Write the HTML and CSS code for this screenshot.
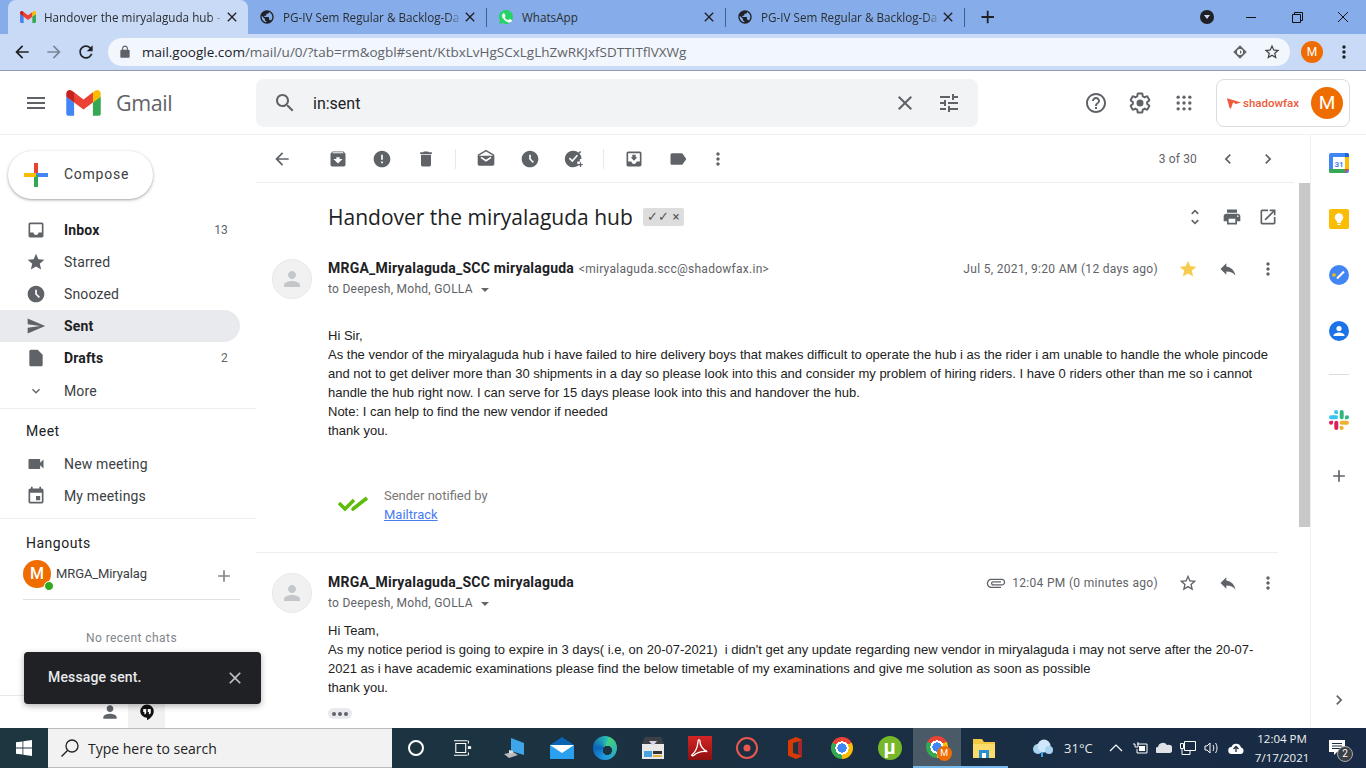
FILE: index.html
```html
<!DOCTYPE html>
<html lang="en">
<head>
    <meta charset="UTF-8">
    <meta name="viewport" content="width=device-width, initial-scale=1.0">
    <title>Handover the miryalaguda hub - Gmail</title>
    <link rel="stylesheet" href="styles.css">
</head>
<body>
    <!-- browser tabs -->
    <div class="tabstrip">
        <div class="tab tab-active">
            <svg class="favicon" viewBox="0 0 256 193"><path fill="#4285F4" d="M58.182 192.05V93.14L27.507 65.077 0 49.504v125.091c0 9.658 7.825 17.455 17.455 17.455h40.727z"/><path fill="#34A853" d="M197.818 192.05h40.727c9.659 0 17.455-7.826 17.455-17.455V49.505l-31.156 17.837-27.026 25.798v98.91z"/><path fill="#EA4335" d="M58.182 93.14l-4.174-38.647 4.174-36.989L128 69.868l69.818-52.364 4.669 34.992-4.669 40.644L128 145.504z"/><path fill="#FBBC04" d="M197.818 17.504V93.14L256 49.504V26.231c0-21.585-24.64-33.89-41.89-20.945l-16.292 12.218z"/><path fill="#C5221F" d="M0 49.504l26.759 20.07L58.182 93.14V17.504L41.89 5.286C24.61-7.66 0 4.646 0 26.23v23.273z"/></svg>
            <span class="tab-title tab-fade">Handover the miryalaguda hub -</span>
            <svg class="tab-x" viewBox="0 0 24 24"><path d="M19 6.41L17.59 5 12 10.59 6.41 5 5 6.41 10.59 12 5 17.59 6.41 19 12 13.41 17.59 19 19 17.59 13.41 12z"/></svg>
        </div>
        <div class="tab tab-sep">
            <svg class="favicon" viewBox="0 0 24 24"><path fill="#202124" d="M12 2C6.48 2 2 6.48 2 12s4.48 10 10 10 10-4.48 10-10S17.52 2 12 2zm-1 17.93C7.05 19.44 4 16.08 4 12c0-.62.08-1.21.21-1.79L9 15v1c0 1.1.9 2 2 2v1.93zm6.9-2.54c-.26-.81-1-1.39-1.9-1.39h-1v-3c0-.55-.45-1-1-1H8v-2h2c.55 0 1-.45 1-1V7h2c1.1 0 2-.9 2-2v-.41c2.93 1.19 5 4.06 5 7.41 0 2.08-.8 3.97-2.1 5.39z"/></svg>
            <span class="tab-title tab-fade">PG-IV Sem Regular &amp; Backlog-Da</span>
            <svg class="tab-x" viewBox="0 0 24 24"><path d="M19 6.41L17.59 5 12 10.59 6.41 5 5 6.41 10.59 12 5 17.59 6.41 19 12 13.41 17.59 19 19 17.59 13.41 12z"/></svg>
        </div>
        <div class="tab tab-sep">
            <svg class="favicon" viewBox="0 0 24 24"><path fill="#25d366" d="M12 1.5C6.2 1.5 1.5 6.2 1.5 12c0 1.9.5 3.7 1.4 5.2L1.5 22.5l5.4-1.4c1.5.8 3.3 1.3 5.1 1.3 5.8 0 10.5-4.7 10.5-10.4S17.8 1.5 12 1.5z"/><path fill="#fff" d="M8.5 6.5c-.3 0-.8.1-1.2.6-.4.5-1.3 1.3-1.3 3.1s1.3 3.6 1.5 3.8c.2.3 2.6 4 6.3 5.4 3 1.2 3.7.7 4.3.6.7-.1 2.1-.9 2.4-1.7.3-.8.3-1.5.2-1.7-.1-.1-.3-.2-.7-.4l-2.4-1.2c-.3-.1-.6-.2-.8.2l-1.1 1.4c-.2.2-.4.3-.8.1-.4-.2-1.5-.6-2.8-1.7-1-.9-1.7-2-1.9-2.4-.2-.4 0-.6.2-.7l.5-.6c.2-.2.2-.4.4-.6.1-.2.1-.5 0-.6L9.7 7.1c-.3-.6-.6-.6-.8-.6h-.4z"/></svg>
            <span class="tab-title">WhatsApp</span>
            <svg class="tab-x" viewBox="0 0 24 24"><path d="M19 6.41L17.59 5 12 10.59 6.41 5 5 6.41 10.59 12 5 17.59 6.41 19 12 13.41 17.59 19 19 17.59 13.41 12z"/></svg>
        </div>
        <div class="tab tab-sep">
            <svg class="favicon" viewBox="0 0 24 24"><path fill="#202124" d="M12 2C6.48 2 2 6.48 2 12s4.48 10 10 10 10-4.48 10-10S17.52 2 12 2zm-1 17.93C7.05 19.44 4 16.08 4 12c0-.62.08-1.21.21-1.79L9 15v1c0 1.1.9 2 2 2v1.93zm6.9-2.54c-.26-.81-1-1.39-1.9-1.39h-1v-3c0-.55-.45-1-1-1H8v-2h2c.55 0 1-.45 1-1V7h2c1.1 0 2-.9 2-2v-.41c2.93 1.19 5 4.06 5 7.41 0 2.08-.8 3.97-2.1 5.39z"/></svg>
            <span class="tab-title tab-fade">PG-IV Sem Regular &amp; Backlog-Da</span>
            <svg class="tab-x" viewBox="0 0 24 24"><path d="M19 6.41L17.59 5 12 10.59 6.41 5 5 6.41 10.59 12 5 17.59 6.41 19 12 13.41 17.59 19 19 17.59 13.41 12z"/></svg>
        </div>
        <svg class="new-tab" viewBox="0 0 24 24"><path d="M19 13h-6v6h-2v-6H5v-2h6V5h2v6h6v2z"/></svg>
        <div class="profile-drop"><span class="drop-arrow"></span></div>
        <div class="window-btns">
            <svg class="win-btn" viewBox="0 0 46 34"><path d="M18 17.5h10" stroke="#111" fill="none"/></svg>
            <svg class="win-btn" viewBox="0 0 46 34"><path d="M18.5 14.5h8v8h-8zM20.5 14.5v-2h8v8h-2" stroke="#111" fill="none"/></svg>
            <svg class="win-btn" viewBox="0 0 46 34"><path d="M18 12l10 10M28 12L18 22" stroke="#111" fill="none"/></svg>
        </div>
    </div>

    <!-- address bar -->
    <div class="addressrow">
        <svg class="nav-ic" viewBox="0 0 24 24"><path d="M20 11H7.83l5.59-5.59L12 4l-8 8 8 8 1.41-1.41L7.83 13H20v-2z"/></svg>
        <svg class="nav-ic nav-off" viewBox="0 0 24 24"><path d="M12 4l-1.41 1.41L16.17 11H4v2h12.17l-5.58 5.59L12 20l8-8z"/></svg>
        <svg class="nav-ic" viewBox="0 0 24 24"><path d="M17.65 6.35C16.2 4.9 14.21 4 12 4c-4.42 0-7.99 3.58-7.99 8s3.57 8 7.99 8c3.73 0 6.84-2.55 7.73-6h-2.08c-.82 2.33-3.04 4-5.65 4-3.31 0-6-2.69-6-6s2.69-6 6-6c1.66 0 3.14.69 4.22 1.78L13 11h7V4l-2.35 2.35z"/></svg>
        <div class="omnibox">
            <svg class="lock" viewBox="0 0 24 24"><path d="M18 8h-1V6c0-2.76-2.24-5-5-5S7 3.24 7 6v2H6c-1.1 0-2 .9-2 2v10c0 1.1.9 2 2 2h12c1.1 0 2-.9 2-2V10c0-1.1-.9-2-2-2zM15.1 8H8.9V6c0-1.71 1.39-3.1 3.1-3.1 1.71 0 3.1 1.39 3.1 3.1v2z"/></svg>
            <span class="url"><b>mail.google.com</b>/mail/u/0/?tab=rm&amp;ogbl#sent/KtbxLvHgSCxLgLhZwRKJxfSDTTITflVXWg</span>
            <svg class="omni-ic" viewBox="0 0 24 24"><path fill="#5f6368" d="M12 3l9 9-9 9-9-9z"/><circle cx="12" cy="12" r="4" fill="#fff"/><path fill="#5f6368" d="M12 9.5l2.5 2.5-2.5 2.5z"/></svg>
            <svg class="omni-ic omni-star" viewBox="0 0 24 24"><path d="M22 9.24l-7.19-.62L12 2 9.19 8.63 2 9.24l5.46 4.73L5.82 21 12 17.27 18.18 21l-1.63-7.03L22 9.24zM12 15.4l-3.76 2.27 1-4.28-3.32-2.88 4.38-.38L12 6.1l1.71 4.04 4.38.38-3.32 2.88 1 4.28L12 15.4z"/></svg>
        </div>
        <span class="chrome-avatar">M</span>
        <svg class="nav-ic chrome-menu" viewBox="0 0 24 24"><path d="M12 8c1.1 0 2-.9 2-2s-.9-2-2-2-2 .9-2 2 .9 2 2 2zm0 2c-1.1 0-2 .9-2 2s.9 2 2 2 2-.9 2-2-.9-2-2-2zm0 6c-1.1 0-2 .9-2 2s.9 2 2 2 2-.9 2-2-.9-2-2-2z"/></svg>
    </div>

    <!-- gmail header -->
    <header class="mail-head">
        <svg class="burger" viewBox="0 0 24 24"><path d="M3 18h18v-2H3v2zm0-5h18v-2H3v2zm0-7v2h18V6H3z"/></svg>
        <svg class="gmail-logo" viewBox="0 0 256 193"><path fill="#4285F4" d="M58.182 192.05V93.14L27.507 65.077 0 49.504v125.091c0 9.658 7.825 17.455 17.455 17.455h40.727z"/><path fill="#34A853" d="M197.818 192.05h40.727c9.659 0 17.455-7.826 17.455-17.455V49.505l-31.156 17.837-27.026 25.798v98.91z"/><path fill="#EA4335" d="M58.182 93.14l-4.174-38.647 4.174-36.989L128 69.868l69.818-52.364 4.669 34.992-4.669 40.644L128 145.504z"/><path fill="#FBBC04" d="M197.818 17.504V93.14L256 49.504V26.231c0-21.585-24.64-33.89-41.89-20.945l-16.292 12.218z"/><path fill="#C5221F" d="M0 49.504l26.759 20.07L58.182 93.14V17.504L41.89 5.286C24.61-7.66 0 4.646 0 26.23v23.273z"/></svg>
        <span class="gmail-word">Gmail</span>
        <div class="searchbox">
            <svg class="ic ic-search" viewBox="0 0 24 24"><path d="M15.5 14h-.79l-.28-.27C15.41 12.59 16 11.11 16 9.5 16 5.91 13.09 3 9.5 3S3 5.91 3 9.5 5.91 16 9.5 16c1.61 0 3.09-.59 4.23-1.57l.27.28v.79l5 4.99L20.49 19l-4.99-5zm-6 0C7.01 14 5 11.99 5 9.5S7.01 5 9.5 5 14 7.01 14 9.5 11.99 14 9.5 14z"/></svg>
            <span class="query">in:sent</span>
            <svg class="ic ic-clear" viewBox="0 0 24 24"><path d="M19 6.41L17.59 5 12 10.59 6.41 5 5 6.41 10.59 12 5 17.59 6.41 19 12 13.41 17.59 19 19 17.59 13.41 12z"/></svg>
            <svg class="ic ic-tune" viewBox="0 0 24 24"><path d="M3 17v2h6v-2H3zM3 5v2h10V5H3zm10 16v-2h8v-2h-8v-2h-2v6h2zM7 9v2H3v2h4v2h2V9H7zm14 4v-2H11v2h10zm-6-4h2V7h4V5h-4V3h-2v6z"/></svg>
        </div>
        <svg class="ic ic-help" viewBox="0 0 24 24"><path d="M11 18h2v-2h-2v2zm1-16C6.48 2 2 6.48 2 12s4.48 10 10 10 10-4.48 10-10S17.52 2 12 2zm0 18c-4.41 0-8-3.59-8-8s3.59-8 8-8 8 3.59 8 8-3.59 8-8 8zm0-14c-2.21 0-4 1.79-4 4h2c0-1.1.9-2 2-2s2 .9 2 2c0 2-3 1.75-3 5h2c0-2.25 3-2.5 3-5 0-2.21-1.79-4-4-4z"/></svg>
        <svg class="ic ic-gear" viewBox="0 0 24 24"><path fill="none" stroke="#5f6368" stroke-width="2" d="M19.14 12.94c.04-.3.06-.61.06-.94 0-.32-.02-.64-.07-.94l2.03-1.58c.18-.14.23-.41.12-.61l-1.92-3.32c-.12-.22-.37-.29-.59-.22l-2.39.96c-.5-.38-1.03-.7-1.62-.94l-.36-2.54c-.04-.24-.24-.41-.48-.41h-3.84c-.24 0-.43.17-.47.41l-.36 2.54c-.59.24-1.13.57-1.62.94l-2.39-.96c-.22-.08-.47 0-.59.22L2.74 8.87c-.12.21-.08.47.12.61l2.03 1.58c-.05.3-.09.63-.09.94s.02.64.07.94l-2.03 1.58c-.18.14-.23.41-.12.61l1.92 3.32c.12.22.37.29.59.22l2.39-.96c.5.38 1.03.7 1.62.94l.36 2.54c.05.24.24.41.48.41h3.84c.24 0 .44-.17.47-.41l.36-2.54c.59-.24 1.13-.56 1.62-.94l2.39.96c.22.08.47 0 .59-.22l1.92-3.32c.12-.22.07-.47-.12-.61l-2.01-1.58z"/><circle cx="12" cy="12" r="3.5"/></svg>
        <svg class="ic ic-apps" viewBox="0 0 24 24"><circle cx="5" cy="5" r="2"/><circle cx="12" cy="5" r="2"/><circle cx="19" cy="5" r="2"/><circle cx="5" cy="12" r="2"/><circle cx="12" cy="12" r="2"/><circle cx="19" cy="12" r="2"/><circle cx="5" cy="19" r="2"/><circle cx="12" cy="19" r="2"/><circle cx="19" cy="19" r="2"/></svg>
        <div class="account-box">
            <svg class="sfx-mark" viewBox="0 0 18 14"><path fill="#ee5a3a" d="M1 1l16 5-6 1.5L8 5.5 5.5 13 4 12z"/></svg>
            <span class="sfx-word">shadowfax</span>
            <span class="account-avatar">M</span>
        </div>
    </header>

    <div class="mail-main">
        <!-- left menu -->
        <nav class="sidebar">
            <div class="compose">
                <svg class="compose-plus" viewBox="0 0 24 24"><rect x="10" y="0" width="4" height="12" fill="#ea4335"/><rect x="12" y="10" width="12" height="4" fill="#4285f4"/><rect x="10" y="12" width="4" height="12" fill="#34a853"/><rect x="0" y="10" width="12" height="4" fill="#fbbc04"/></svg>
                <span>Compose</span>
            </div>
            <ul class="folders">
                <li class="folder strong"><svg class="ic" viewBox="0 0 24 24"><path d="M19 3H4.99c-1.11 0-1.98.9-1.98 2L3 19c0 1.1.88 2 1.99 2H19c1.1 0 2-.9 2-2V5c0-1.1-.9-2-2-2zm0 12h-4c0 1.66-1.35 3-3 3s-3-1.34-3-3H4.99V5H19v10z"/></svg><span class="folder-name">Inbox</span><span class="count">13</span></li>
                <li class="folder"><svg class="ic" viewBox="0 0 24 24"><path d="M12 17.27L18.18 21l-1.64-7.03L22 9.24l-7.19-.61L12 2 9.19 8.63 2 9.24l5.46 4.73L5.82 21z"/></svg><span class="folder-name">Starred</span></li>
                <li class="folder"><svg class="ic" viewBox="0 0 24 24"><path d="M11.99 2C6.47 2 2 6.48 2 12s4.47 10 9.99 10C17.52 22 22 17.52 22 12S17.52 2 11.99 2zm3.3 14.71L11 12.41V7h2v4.59l3.71 3.71-1.42 1.41z"/></svg><span class="folder-name">Snoozed</span></li>
                <li class="folder strong current"><svg class="ic" viewBox="0 0 24 24"><path d="M2.01 21L23 12 2.01 3 2 10l15 2-15 2z"/></svg><span class="folder-name">Sent</span></li>
                <li class="folder strong"><svg class="ic" viewBox="0 0 24 24"><path d="M6 2c-1.1 0-1.99.9-1.99 2L4 20c0 1.1.89 2 1.99 2H18c1.1 0 2-.9 2-2V8l-6-6H6z"/></svg><span class="folder-name">Drafts</span><span class="count">2</span></li>
                <li class="folder folder-more"><svg class="ic" viewBox="0 0 24 24"><path d="M16.59 8.59L12 13.17 7.41 8.59 6 10l6 6 6-6z"/></svg><span class="folder-name">More</span></li>
            </ul>
            <div class="side-section">
                <div class="side-label">Meet</div>
                <div class="folder"><svg class="ic" viewBox="0 0 24 24"><path d="M17 10.5V7c0-.55-.45-1-1-1H4c-.55 0-1 .45-1 1v10c0 .55.45 1 1 1h12c.55 0 1-.45 1-1v-3.5l4 4v-11l-4 4z"/></svg><span class="folder-name">New meeting</span></div>
                <div class="folder"><svg class="ic" viewBox="0 0 24 24"><path d="M17 12h-5v5h5v-5zM16 1v2H8V1H6v2H5c-1.11 0-1.99.9-1.99 2L3 19c0 1.1.89 2 2 2h14c1.1 0 2-.9 2-2V5c0-1.1-.9-2-2-2h-1V1h-2zm3 18H5V8h14v11z"/></svg><span class="folder-name">My meetings</span></div>
            </div>
            <div class="side-section side-hangouts">
                <div class="side-label">Hangouts</div>
                <div class="hangout-user">
                    <span class="hangout-avatar">M<span class="online"></span></span>
                    <span class="hangout-name">MRGA_Miryalag</span>
                    <svg class="ic hangout-add" viewBox="0 0 24 24"><path d="M19 13h-6v6h-2v-6H5v-2h6V5h2v6h6v2z"/></svg>
                </div>
                <div class="no-chats">No recent chats</div>
            </div>
            <div class="side-tray">
                <svg class="ic tray-person" viewBox="0 0 24 24"><path d="M12 12c2.21 0 4-1.79 4-4s-1.79-4-4-4-4 1.79-4 4 1.79 4 4 4zm0 2c-2.67 0-8 1.34-8 4v2h16v-2c0-2.66-5.33-4-8-4z"/></svg>
                <span class="tray-chat"><svg viewBox="0 0 24 24"><path fill="#111" d="M12 2a9 9 0 0 0-9 9c0 5 4.5 8.5 9 8.5V23c4.5-2.5 9-6.5 9-12a9 9 0 0 0-9-9z"/><path fill="#fff" d="M7 8h4v4.5c0 1.5-1 2.5-2.5 2.5v-3H7zM13 8h4v4.5c0 1.5-1 2.5-2.5 2.5v-3H13z"/></svg></span>
            </div>
        </nav>

        <!-- conversation -->
        <main class="content">
            <div class="tools">
                <span class="tool tool-back"><svg class="ic" viewBox="0 0 24 24"><path d="M20 11H7.83l5.59-5.59L12 4l-8 8 8 8 1.41-1.41L7.83 13H20v-2z"/></svg></span>
                <span class="tool tool-gap"><svg class="ic" viewBox="0 0 24 24"><path d="M20.54 5.23l-1.39-1.68C18.88 3.21 18.47 3 18 3H6c-.47 0-.88.21-1.16.55L3.46 5.23C3.17 5.57 3 6.02 3 6.5V19c0 1.1.9 2 2 2h14c1.1 0 2-.9 2-2V6.5c0-.48-.17-.93-.46-1.27zM12 17.5L6.5 12H10v-2h4v2h3.5L12 17.5zM5.12 5l.81-1h12l.94 1H5.12z"/></svg></span>
                <span class="tool"><svg class="ic" viewBox="0 0 24 24"><path d="M12 2C6.48 2 2 6.48 2 12s4.48 10 10 10 10-4.48 10-10S17.52 2 12 2zm1 15h-2v-2h2v2zm0-4h-2V7h2v6z"/></svg></span>
                <span class="tool"><svg class="ic" viewBox="0 0 24 24"><path d="M6 19c0 1.1.9 2 2 2h8c1.1 0 2-.9 2-2V7H6v12zM19 4h-3.5l-1-1h-5l-1 1H5v2h14V4z"/></svg></span>
                <span class="tool-sep"></span>
                <span class="tool"><svg class="ic" viewBox="0 0 24 24"><path d="M22 8c0-.72-.37-1.35-.94-1.7L12 1 2.95 6.3C2.38 6.65 2 7.28 2 8v10c0 1.1.9 2 2 2h16c1.1 0 2-.9 2-2l-.01-10zM12 3l8.26 4.84L20 8H4l-.26-.16z"/><path d="M6 10l6 4 6-4" fill="none" stroke="#fff" stroke-width="2"/></svg></span>
                <span class="tool"><svg class="ic" viewBox="0 0 24 24"><path d="M11.99 2C6.47 2 2 6.48 2 12s4.47 10 9.99 10C17.52 22 22 17.52 22 12S17.52 2 11.99 2zm3.3 14.71L11 12.41V7h2v4.59l3.71 3.71-1.42 1.41z"/></svg></span>
                <span class="tool"><svg class="ic" viewBox="0 0 24 24"><path d="M11 2a10 10 0 1 0 8 16h-3v-3h3v-3h2a10 10 0 0 0-10-10z"/><path d="M6.5 11l3.5 3.5 6-7" fill="none" stroke="#fff" stroke-width="2"/><path d="M20 3l-2 2" stroke="#5f6368" stroke-width="2"/><path d="M19 16v2h-2v1.5h2v2h1.5v-2h2V18h-2v-2z"/></svg></span>
                <span class="tool-sep"></span>
                <span class="tool"><svg class="ic" viewBox="0 0 24 24"><path d="M19 3H4.99c-1.11 0-1.98.9-1.98 2L3 19c0 1.1.88 2 1.99 2H19c1.1 0 2-.9 2-2V5c0-1.1-.9-2-2-2zm0 12h-4c0 1.66-1.35 3-3 3s-3-1.34-3-3H4.99V5H19v10zm-3-5h-2V7h-4v3H8l4 4 4-4z"/></svg></span>
                <span class="tool"><svg class="ic" viewBox="0 0 24 24"><path d="M17.63 5.84C17.27 5.33 16.67 5 16 5L5 5.01C3.9 5.01 3 5.9 3 7v10c0 1.1.9 1.99 2 1.99L16 19c.67 0 1.27-.33 1.63-.84L22 12l-4.37-6.16z"/></svg></span>
                <span class="tool tool-narrow"><svg class="ic" viewBox="0 0 24 24"><path d="M12 8c1.1 0 2-.9 2-2s-.9-2-2-2-2 .9-2 2 .9 2 2 2zm0 2c-1.1 0-2 .9-2 2s.9 2 2 2 2-.9 2-2-.9-2-2-2zm0 6c-1.1 0-2 .9-2 2s.9 2 2 2 2-.9 2-2-.9-2-2-2z"/></svg></span>
                <span class="pager-text">3 of 30</span>
                <span class="tool tool-pager"><svg class="ic" viewBox="0 0 24 24"><path d="M15.41 7.41L14 6l-6 6 6 6 1.41-1.41L10.83 12z"/></svg></span>
                <span class="tool tool-pager"><svg class="ic" viewBox="0 0 24 24"><path d="M10 6L8.59 7.41 13.17 12l-4.58 4.59L10 18l6-6z"/></svg></span>
            </div>
            <div class="thread-wrap">
                <div class="thread">
                    <div class="subject-row">
                        <h1 class="subject">Handover the miryalaguda hub</h1>
                        <span class="chip">✓✓ <i>×</i></span>
                        <div class="subject-tools">
                            <svg class="ic" viewBox="0 0 24 24"><path d="M12 5.83L15.17 9l1.41-1.41L12 3 7.41 7.59 8.83 9 12 5.83zm0 12.34L8.83 15l-1.41 1.41L12 21l4.59-4.59L15.17 15 12 18.17z"/></svg>
                            <svg class="ic" viewBox="0 0 24 24"><path d="M19 8H5c-1.66 0-3 1.34-3 3v6h4v4h12v-4h4v-6c0-1.66-1.34-3-3-3zm-3 11H8v-5h8v5zm3-7c-.55 0-1-.45-1-1s.45-1 1-1 1 .45 1 1-.45 1-1 1zm-1-9H6v4h12V3z"/></svg>
                            <svg class="ic" viewBox="0 0 24 24"><path d="M19 19H5V5h7V3H5c-1.11 0-2 .9-2 2v14c0 1.1.89 2 2 2h14c1.1 0 2-.9 2-2v-7h-2v7zM14 3v2h3.59l-9.83 9.83 1.41 1.41L19 6.41V10h2V3h-7z"/></svg>
                        </div>
                    </div>

                    <article class="msg msg-first">
                        <div class="msg-head">
                            <span class="msg-avatar"><svg viewBox="0 0 24 24"><path d="M12 12c2.21 0 4-1.79 4-4s-1.79-4-4-4-4 1.79-4 4 1.79 4 4 4zm0 2c-2.67 0-8 1.34-8 4v2h16v-2c0-2.66-5.33-4-8-4z"/></svg></span>
                            <div class="msg-who">
                                <div class="msg-from"><b>MRGA_Miryalaguda_SCC miryalaguda</b> <span class="msg-email">&lt;miryalaguda.scc@shadowfax.in&gt;</span></div>
                                <div class="msg-to">to Deepesh, Mohd, GOLLA <span class="to-arrow"></span></div>
                            </div>
                            <span class="msg-date">Jul 5, 2021, 9:20 AM (12 days ago)</span>
                            <span class="msg-act"><svg class="ic star-on" viewBox="0 0 24 24"><path d="M12 17.27L18.18 21l-1.64-7.03L22 9.24l-7.19-.61L12 2 9.19 8.63 2 9.24l5.46 4.73L5.82 21z"/></svg></span>
                            <span class="msg-act"><svg class="ic" viewBox="0 0 24 24"><path d="M10 9V5l-7 7 7 7v-4.1c5 0 8.5 1.6 11 5.1-1-5-4-10-11-11z"/></svg></span>
                            <span class="msg-act"><svg class="ic" viewBox="0 0 24 24"><path d="M12 8c1.1 0 2-.9 2-2s-.9-2-2-2-2 .9-2 2 .9 2 2 2zm0 2c-1.1 0-2 .9-2 2s.9 2 2 2 2-.9 2-2-.9-2-2-2zm0 6c-1.1 0-2 .9-2 2s.9 2 2 2 2-.9 2-2-.9-2-2-2z"/></svg></span>
                        </div>
                        <div class="msg-body msg-body-first">
                            Hi Sir,<br>
                            As the vendor of the miryalaguda hub i have failed to hire delivery boys that makes difficult to operate the hub i as the rider i am unable to handle the whole pincode<br>
                            and not to get deliver more than 30 shipments in a day so please look into this and consider my problem of hiring riders. I have 0 riders other than me so i cannot<br>
                            handle the hub right now. I can serve for 15 days please look into this and handover the hub.<br>
                            Note: I can help to find the new vendor if needed<br>
                            thank you.
                        </div>
                        <div class="tracker">
                            <svg class="tracker-check" viewBox="0 0 32 16"><path d="M2 8l6 6 9-9M15 13l1 1 14-11" fill="none" stroke="#5dbb0a" stroke-width="3.5"/></svg>
                            <div class="tracker-text">
                                <div>Sender notified by</div>
                                <a href="#">Mailtrack</a>
                            </div>
                        </div>
                    </article>

                    <article class="msg msg-second">
                        <div class="msg-head">
                            <span class="msg-avatar"><svg viewBox="0 0 24 24"><path d="M12 12c2.21 0 4-1.79 4-4s-1.79-4-4-4-4 1.79-4 4 1.79 4 4 4zm0 2c-2.67 0-8 1.34-8 4v2h16v-2c0-2.66-5.33-4-8-4z"/></svg></span>
                            <div class="msg-who">
                                <div class="msg-from"><b>MRGA_Miryalaguda_SCC miryalaguda</b></div>
                                <div class="msg-to">to Deepesh, Mohd, GOLLA <span class="to-arrow"></span></div>
                            </div>
                            <svg class="ic clip" viewBox="0 0 24 24"><path d="M16.5 6v11.5c0 2.21-1.79 4-4 4s-4-1.79-4-4V5c0-1.38 1.12-2.5 2.5-2.5s2.5 1.12 2.5 2.5v10.5c0 .55-.45 1-1 1s-1-.45-1-1V6H10v9.5c0 1.38 1.12 2.5 2.5 2.5s2.5-1.12 2.5-2.5V5c0-2.21-1.79-4-4-4S7 2.79 7 5v12.5c0 3.04 2.46 5.5 5.5 5.5s5.5-2.46 5.5-5.5V6h-1.5z"/></svg>
                            <span class="msg-date">12:04 PM (0 minutes ago)</span>
                            <span class="msg-act"><svg class="ic" viewBox="0 0 24 24"><path d="M22 9.24l-7.19-.62L12 2 9.19 8.63 2 9.24l5.46 4.73L5.82 21 12 17.27 18.18 21l-1.63-7.03L22 9.24zM12 15.4l-3.76 2.27 1-4.28-3.32-2.88 4.38-.38L12 6.1l1.71 4.04 4.38.38-3.32 2.88 1 4.28L12 15.4z"/></svg></span>
                            <span class="msg-act"><svg class="ic" viewBox="0 0 24 24"><path d="M10 9V5l-7 7 7 7v-4.1c5 0 8.5 1.6 11 5.1-1-5-4-10-11-11z"/></svg></span>
                            <span class="msg-act"><svg class="ic" viewBox="0 0 24 24"><path d="M12 8c1.1 0 2-.9 2-2s-.9-2-2-2-2 .9-2 2 .9 2 2 2zm0 2c-1.1 0-2 .9-2 2s.9 2 2 2 2-.9 2-2-.9-2-2-2zm0 6c-1.1 0-2 .9-2 2s.9 2 2 2 2-.9 2-2-.9-2-2-2z"/></svg></span>
                        </div>
                        <div class="msg-body msg-body-second">
                            Hi Team,<br>
                            As my notice period is going to expire in 3 days( i.e, on 20-07-2021)&nbsp; i didn't get any update regarding new vendor in miryalaguda i may not serve after the 20-07-<br>
                            2021 as i have academic examinations please find the below timetable of my examinations and give me solution as soon as possible<br>
                            thank you.
                        </div>
                        <div class="trimmed"><i></i><i></i><i></i></div>
                    </article>
                </div>
                <div class="scrollbar"></div>
            </div>
        </main>

        <!-- side panel apps -->
        <aside class="rail">
            <span class="rail-slot">
                <svg class="rail-ic" viewBox="0 0 20 20"><rect width="20" height="20" rx="2" fill="#4285f4"/><rect x="4" y="4" width="12" height="12" fill="#fff"/><path d="M16 0h2a2 2 0 0 1 2 2v2h-4z" fill="#1967d2"/><rect x="16" y="4" width="4" height="12" fill="#fbbc04"/><path d="M0 16h16v4H2a2 2 0 0 1-2-2z" fill="#34a853"/><path d="M16 16h4l-4 4z" fill="#ea4335"/><text class="cal-num" x="10" y="13.5">31</text></svg>
            </span>
            <span class="rail-slot">
                <svg class="rail-ic" viewBox="0 0 20 20"><rect width="20" height="20" rx="2" fill="#fbbc04"/><circle cx="10" cy="8.5" r="4.2" fill="#fff"/><rect x="8" y="12" width="4" height="2" fill="#fff"/><rect x="8.5" y="14.8" width="3" height="1.2" fill="#fff"/></svg>
            </span>
            <span class="rail-slot">
                <svg class="rail-ic" viewBox="0 0 20 20"><circle cx="10" cy="10" r="10" fill="#4285f4"/><path d="M8 13.5l7-7" stroke="#fff" stroke-width="2.2"/><circle cx="5" cy="10" r="1.8" fill="#fbbc04"/></svg>
            </span>
            <span class="rail-slot">
                <svg class="rail-ic" viewBox="0 0 20 20"><circle cx="10" cy="10" r="10" fill="#1a73e8"/><circle cx="10" cy="7.5" r="2.6" fill="#fff"/><path d="M4.5 14.5c0-2 3.5-3 5.5-3s5.5 1 5.5 3v.5h-11z" fill="#fff"/></svg>
            </span>
            <span class="rail-line"></span>
            <span class="rail-slot">
                <svg class="rail-ic" viewBox="0 0 20 20"><path d="M7 0a2 2 0 0 0 0 4h2V2a2 2 0 0 0-2-2zM2 5.3a2 2 0 0 0 0 4h5a2 2 0 0 0 0-4z" fill="#36c5f0"/><path d="M20 7.3a2 2 0 0 0-4 0v2h2a2 2 0 0 0 2-2zM14.7 2a2 2 0 0 0-4 0v5.3a2 2 0 0 0 4 0z" fill="#2eb67d"/><path d="M12.7 20a2 2 0 0 0 0-4h-2v2a2 2 0 0 0 2 2zM18 14.7a2 2 0 0 0 0-4h-5.3a2 2 0 0 0 0 4z" fill="#ecb22e"/><path d="M0 12.7a2 2 0 0 0 4 0v-2H2a2 2 0 0 0-2 2zM5.3 18a2 2 0 0 0 4 0v-5.3a2 2 0 0 0-4 0z" fill="#e01e5a"/></svg>
            </span>
            <span class="rail-slot">
                <svg class="ic" viewBox="0 0 24 24"><path d="M19 13h-6v6h-2v-6H5v-2h6V5h2v6h6v2z"/></svg>
            </span>
            <svg class="ic rail-open" viewBox="0 0 24 24"><path d="M10 6L8.59 7.41 13.17 12l-4.58 4.59L10 18l6-6z"/></svg>
        </aside>
    </div>

    <!-- sent toast, sits over the menu -->
    <div class="toast">
        <span>Message sent.</span>
        <svg viewBox="0 0 24 24"><path d="M19 6.41L17.59 5 12 10.59 6.41 5 5 6.41 10.59 12 5 17.59 6.41 19 12 13.41 17.59 19 19 17.59 13.41 12z"/></svg>
    </div>

    <!-- windows taskbar -->
    <footer class="taskbar">
        <span class="start"><svg viewBox="0 0 16 16"><path fill="#fff" d="M0 2.3l6.5-.9v6.2H0zM7.3 1.3L16 0v7.6H7.3zM0 8.4h6.5v6.2L0 13.7zM7.3 8.4H16V16l-8.7-1.3z"/></svg></span>
        <div class="win-search">
            <svg viewBox="0 0 20 20"><circle cx="12" cy="8" r="6" fill="none" stroke="#222" stroke-width="1.3"/><path d="M7.5 12.5L1.5 18.5" stroke="#222" stroke-width="1.5"/></svg>
            <span>Type here to search</span>
        </div>
        <div class="task-apps">
            <span class="task-app"><span class="cortana"></span></span>
            <span class="task-app"><svg class="task-ic task-view" viewBox="0 0 20 20"><path d="M2 5h11v10H2zM0 2h15M0 18h15M16 2v3M16 8v3M16 15v3" fill="none" stroke="#fff" stroke-width="1.2"/><rect x="16" y="8" width="3" height="3" fill="#fff"/></svg></span>
            <span class="task-app app-pc"><svg class="task-ic" viewBox="0 0 24 24"><path d="M9 2l13 5v12L9 15z" fill="#3ea6e8"/><path d="M2 18l9-2 5 3-9 3z" fill="#bbb"/><path d="M7 14l4 1v2l-4 .5z" fill="#ddd"/></svg></span>
            <span class="task-app app-mail"><svg class="task-ic" viewBox="0 0 24 24"><path d="M0 9l12-8 12 8z" fill="#0a64b4"/><rect y="9" width="24" height="14" fill="#2aa0ee"/><path d="M0 9l12 8 12-8z" fill="#fff"/></svg></span>
            <span class="task-app"><span class="edge"></span></span>
            <span class="task-app"><svg class="task-ic" viewBox="0 0 24 24"><rect x="1" y="8" width="22" height="15" fill="#e9e9e9"/><path d="M4 1h16l3 7H1z" fill="#3d4045"/><path d="M8 5h8l-4 5z" fill="#d9d3e8"/><rect x="3" y="15" width="8" height="6" fill="#4aa3e0"/><rect x="12" y="15" width="9" height="3" fill="#333"/><rect x="12" y="19" width="9" height="2" fill="#e3b33d"/></svg></span>
            <span class="task-app"><span class="acrobat"><svg viewBox="0 0 20 20"><path d="M3 16c3-2 5-7 5.5-12 .2-1.5 1.5-1 1.5.5 0 3 2 7 6 8.5-4-.5-8 .5-11 3-1 .8-2 .5-2 0z" fill="none" stroke="#fff" stroke-width="1.1"/></svg></span></span>
            <span class="task-app"><svg class="task-ic" viewBox="0 0 24 24"><circle cx="12" cy="12" r="10" fill="none" stroke="#e8584c" stroke-width="2"/><circle cx="12" cy="12" r="3.5" fill="#e8584c"/></svg></span>
            <span class="task-app"><svg class="task-ic" viewBox="0 0 24 24"><path d="M13 1l6 2.5v17L13 23 5 19.5v-15z" fill="#d83b01"/><path d="M10 7l5-1.5v13L10 17z" fill="#1c3340"/><path d="M15 5.5l4-2v17l-4-2z" fill="#a4262c"/></svg></span>
            <span class="task-app"><span class="chrome-logo"></span></span>
            <span class="task-app"><span class="utorrent">µ</span></span>
            <span class="task-app task-on">
                <span class="chrome-logo"></span>
                <span class="chrome-badge">M</span>
            </span>
            <span class="task-app task-open"><svg class="task-ic" viewBox="0 0 24 24"><path d="M1 3h9l2 3h11v16H1z" fill="#f2c744"/><path d="M1 8h22v14H1z" fill="#fbdc6a"/><rect x="7" y="14" width="10" height="8" fill="#2b8fd8"/><rect x="10" y="17" width="4" height="5" fill="#fff"/></svg></span>
        </div>
        <div class="tray">
            <svg class="tray-weather" viewBox="0 0 24 18"><circle cx="8" cy="10" r="5" fill="#a8d4f2"/><circle cx="14" cy="7" r="6.5" fill="#cfe7f8"/><circle cx="19" cy="11" r="4" fill="#a8d4f2"/><path d="M12 13v5" stroke="#3ea6e8" stroke-width="2"/></svg>
            <span class="tray-temp">31°C</span>
            <svg class="tray-ic tray-caret" viewBox="0 0 16 16"><path d="M2 11l6-6 6 6" fill="none" stroke="#fff" stroke-width="1.2"/></svg>
            <svg class="tray-ic" viewBox="0 0 16 16"><path d="M1 4h2v3h3V2M5 4h10v9H5V9" fill="none" stroke="#fff"/><rect x="7" y="6" width="6" height="5" fill="#fff"/></svg>
            <svg class="tray-ic" viewBox="0 0 16 16"><path d="M2 13a3 3 0 0 1 0-6 5 5 0 0 1 9-2 4 4 0 0 1 3 8z" fill="#dfe3e6"/></svg>
            <svg class="tray-ic" viewBox="0 0 16 16"><path d="M4.5 1.5h11v9h-11zM.5 3.5h3v5h-3zM2 8.5v6h8M10 10.5v4" fill="none" stroke="#fff"/></svg>
            <svg class="tray-ic" viewBox="0 0 16 16"><path d="M1 6h2l3-3v10l-3-3H1zM9 5c1 2 1 4 0 6M11.5 3c2 3 2 7 0 10" fill="none" stroke="#fff"/></svg>
            <svg class="tray-ic" viewBox="0 0 16 16"><path d="M4 14a3.5 3.5 0 0 1-.5-7 5 5 0 0 1 9.5.5A3.3 3.3 0 0 1 12.5 14z" fill="#fff"/><path d="M8 12V7M5.5 9L8 6.5 10.5 9" fill="none" stroke="#1a2c42" stroke-width="1.3"/></svg>
            <div class="clock"><div>12:04 PM</div><div>7/17/2021</div></div>
            <span class="notify">
                <svg viewBox="0 0 16 16"><path d="M0 0h16v12H8l-3 3v-3H0z" fill="#fff"/><path d="M3 3.5h10M3 6h10M3 8.5h10" stroke="#1a2c42"/></svg>
                <b class="notify-count">2</b>
            </span>
        </div>
    </footer>
</body>
</html>
```

FILE: styles.css
```css
* {
    box-sizing: border-box;
}
html, body {
    margin: 0;
    height: 768px;
    overflow: hidden;
}
body {
    display: flex;
    flex-direction: column;
    position: relative;
    font-family: Roboto, Arial, sans-serif;
    background: #fff;
    color: #202124;
}
ul {
    list-style: none;
    margin: 0;
    padding: 0;
}

/* browser */
.tabstrip {
    height: 34px;
    flex: none;
    display: flex;
    align-items: center;
    padding-left: 8px;
    background: #86ade9;
}
.tab {
    width: 239px;
    height: 34px;
    flex: none;
    display: flex;
    align-items: center;
    padding: 0 9px 0 11px;
    font-family: "Open Sans", sans-serif;
    font-size: 11.7px;
    color: #2a2d32;
    position: relative;
}
.tab-active {
    width: 240px;
    background: #c9daf6;
    border-radius: 8px 8px 0 0;
    padding-left: 12px;
    padding-right: 8px;
}
.tab-sep::after {
    content: "";
    position: absolute;
    right: 0;
    top: 8px;
    height: 19px;
    width: 1px;
    background: #3f5f8e;
}
.favicon {
    width: 16px;
    height: 16px;
    flex: none;
    margin-right: 8px;
}
.tab-active .favicon {
    height: 12px;
}
.tab-title {
    flex: 1;
    white-space: nowrap;
}
.tab-fade {
    -webkit-mask-image: linear-gradient(to right, #000 92%, transparent);
    mask-image: linear-gradient(to right, #000 92%, transparent);
}
.tab-x {
    width: 16px;
    height: 16px;
    flex: none;
    fill: #202124;
}
.new-tab {
    width: 22px;
    height: 22px;
    margin-left: 12px;
    fill: #202124;
}
.profile-drop {
    width: 14px;
    height: 14px;
    margin-left: 202px;
    border-radius: 50%;
    background: #202124;
    display: flex;
    align-items: center;
    justify-content: center;
}
.drop-arrow {
    border: 3px solid transparent;
    border-top: 4px solid #c9daf6;
    border-bottom: 0;
}
.window-btns {
    display: flex;
    margin-left: 14px;
}
.win-btn {
    width: 46px;
    height: 34px;
}
.addressrow {
    height: 37px;
    flex: none;
    display: flex;
    align-items: center;
    padding-left: 12px;
    background: #c9daf6;
    border-bottom: 1px solid #8e9ab0;
}
.nav-ic {
    width: 20px;
    height: 20px;
    margin-right: 12px;
    fill: #202124;
}
.nav-off {
    fill: #7a8698;
}
.omnibox {
    height: 28px;
    width: 1182px;
    display: flex;
    align-items: center;
    padding: 0 8px 0 10px;
    background: #f2f6fd;
    border-radius: 14px;
}
.lock {
    width: 14px;
    height: 14px;
    fill: #5f6368;
    margin-right: 10px;
}
.url {
    flex: 1;
    font-family: "Open Sans", sans-serif;
    font-size: 13.5px;
    color: #5f6368;
    white-space: nowrap;
}
.url b {
    font-weight: normal;
    color: #202124;
}
.omni-ic {
    width: 18px;
    height: 18px;
    flex: none;
    margin-right: 14px;
}
.omni-star {
    margin-right: 1px;
    fill: #3c4043;
}
.chrome-avatar {
    width: 22px;
    height: 22px;
    margin-left: 11px;
    flex: none;
    border-radius: 50%;
    background: #ef6c00;
    color: #fff;
    font-size: 12px;
    line-height: 22px;
    text-align: center;
}
.chrome-menu {
    margin: 0 0 0 11px;
}

/* gmail header */
.mail-head {
    height: 64px;
    flex: none;
    display: flex;
    align-items: center;
    padding-top: 1px;
    border-bottom: 1px solid #f1f1f1;
}
.ic {
    width: 20px;
    height: 20px;
    flex: none;
    fill: #5f6368;
}
.burger {
    width: 24px;
    height: 24px;
    margin-left: 24px;
    fill: #5f6368;
}
.gmail-logo {
    width: 35px;
    height: 26px;
    margin-left: 18px;
}
.gmail-word {
    margin-left: 15px;
    padding-bottom: 2px;
    width: 140px;
    font-family: "Open Sans", sans-serif;
    font-size: 21.5px;
    letter-spacing: -0.4px;
    color: #5f6368;
}
.searchbox {
    width: 722px;
    height: 48px;
    display: flex;
    align-items: center;
    background: #f1f3f4;
    border-radius: 8px;
    padding: 0 17px;
}
.ic-search, .ic-clear, .ic-tune, .ic-help, .ic-gear {
    width: 24px;
    height: 24px;
}
.query {
    flex: 1;
    margin-left: 16px;
    font-size: 16px;
    color: #202124;
}
.ic-tune {
    margin-left: 20px;
}
.ic-help {
    margin-left: 106px;
}
.ic-gear {
    margin-left: 20px;
}
.ic-apps {
    margin-left: 22px;
}
.account-box {
    width: 134px;
    height: 48px;
    margin-left: 22px;
    display: flex;
    align-items: center;
    padding: 0 6px 0 9px;
    border: 1px solid #dadce0;
    border-radius: 8px;
}
.sfx-mark {
    width: 16px;
    height: 13px;
    flex: none;
}
.sfx-word {
    flex: 1;
    margin-left: 1px;
    font-size: 11.5px;
    font-weight: 500;
    color: #ee5a3a;
}
.account-avatar {
    width: 32px;
    height: 32px;
    flex: none;
    border-radius: 50%;
    background: #ef6c00;
    color: #fff;
    font-size: 19px;
    line-height: 32px;
    text-align: center;
}

/* layout under the header */
.mail-main {
    flex: 1;
    min-height: 0;
    display: flex;
}

/* left menu */
.sidebar {
    width: 256px;
    flex: none;
    display: flex;
    flex-direction: column;
    overflow: hidden;
}
.compose {
    width: 145px;
    height: 48px;
    margin: 16px 0 15px 8px;
    flex: none;
    display: flex;
    align-items: center;
    padding: 0 0 0 16px;
    border-radius: 24px;
    background: #fff;
    box-shadow: 0 1px 2px rgba(60, 64, 67, .3), 0 1px 3px 1px rgba(60, 64, 67, .15);
    font-size: 14px;
    letter-spacing: .75px;
    color: #3c4043;
}
.compose span {
    margin-top: -2px;
}
.compose-plus {
    width: 24px;
    height: 24px;
    margin-right: 16px;
}
.folders {
    border-bottom: 1px solid #eee;
    padding-bottom: 1px;
    flex: none;
}
.folder {
    width: 240px;
    height: 32px;
    display: flex;
    align-items: center;
    padding: 0 12px 0 26px;
    font-size: 14px;
    letter-spacing: .15px;
    color: #3c4043;
    border-radius: 0 16px 16px 0;
}
.folder .ic {
    margin-right: 18px;
}
.folder-name {
    flex: 1;
    white-space: nowrap;
}
.strong .folder-name {
    font-weight: 700;
    color: #202124;
}
.current {
    background: #e8eaed;
}
.count {
    font-size: 12px;
    color: #5f6368;
}
.folder-more {
    height: 33px;
}
.folder-more .ic {
    transform: scale(.8);
}
.side-section {
    flex: none;
    border-bottom: 1px solid #eee;
    padding: 12px 0 6px;
}
.side-label {
    height: 20px;
    margin-bottom: 7px;
    padding-left: 26px;
    font-size: 14px;
    letter-spacing: .5px;
    line-height: 20px;
    color: #202124;
}
.side-hangouts {
    border-bottom: 0;
    padding: 14px 0 0;
}
.hangout-user {
    width: 217px;
    height: 40px;
    margin-left: 23px;
    display: flex;
    align-items: flex-start;
    border-bottom: 1px solid #e0e0e0;
}
.hangout-avatar {
    width: 28px;
    height: 28px;
    flex: none;
    position: relative;
    border-radius: 50%;
    background: #ef6c00;
    color: #fff;
    font-size: 16px;
    font-weight: 500;
    line-height: 28px;
    text-align: center;
}
.online {
    position: absolute;
    right: -3px;
    bottom: -3px;
    width: 10px;
    height: 10px;
    border-radius: 50%;
    background: #30a91f;
    border: 1px solid #fff;
}
.hangout-name {
    margin: 6px 0 0 5px;
    white-space: nowrap;
    font-size: 13px;
    letter-spacing: -.1px;
    color: #3c4043;
}
.hangout-add {
    margin: 6px 6px 0 auto;
    fill: #80868b;
}
.no-chats {
    margin-top: 31px;
    padding-left: 7px;
    text-align: center;
    font-size: 12px;
    letter-spacing: .45px;
    color: #80868b;
}
.side-tray {
    margin-top: auto;
    height: 33px;
    flex: none;
    display: flex;
    align-items: flex-end;
    justify-content: flex-end;
    padding-right: 91px;
    border-top: 1px solid #e8e8e8;
}
.tray-person {
    margin-right: 8px;
    margin-bottom: 6px;
}
.tray-chat {
    width: 37px;
    height: 24px;
    display: flex;
    align-items: flex-start;
    justify-content: center;
    background: #f1f1f1;
}
.tray-chat svg {
    width: 18px;
    height: 18px;
    margin-top: -1px;
}

/* toast */
.toast {
    position: absolute;
    left: 24px;
    top: 652px;
    width: 237px;
    height: 52px;
    display: flex;
    align-items: center;
    justify-content: space-between;
    padding: 0 16px 0 24px;
    background: #202124;
    border-radius: 4px;
    box-shadow: 0 2px 6px rgba(0, 0, 0, .3);
    color: #e8eaed;
    font-size: 14px;
    font-weight: 500;
    letter-spacing: .15px;
}
.toast span {
    margin-top: -2px;
}
.toast svg {
    width: 20px;
    height: 20px;
    fill: #bdc1c6;
}

/* conversation */
.content {
    flex: 1;
    min-width: 0;
    display: flex;
    flex-direction: column;
}
.tools {
    height: 48px;
    flex: none;
    margin-right: 16px;
    display: flex;
    align-items: center;
    padding: 0 6px 0 4px;
    border-bottom: 1px solid #eee;
}
.tool {
    width: 44px;
    height: 40px;
    flex: none;
    display: flex;
    align-items: center;
    justify-content: center;
}
.tool-back {
    margin-right: 12px;
}
.tool-sep {
    width: 1px;
    height: 20px;
    margin: 0 8px 0 7px;
    background: #e8e8e8;
}
.tool-narrow {
    width: 36px;
}
.pager-text {
    margin-left: auto;
    margin-right: 11px;
    font-size: 12px;
    letter-spacing: .15px;
    color: #5f6368;
}
.tool-pager {
    width: 40px;
}
.thread-wrap {
    flex: 1;
    min-height: 0;
    display: flex;
    overflow: hidden;
}
.thread {
    flex: 1;
    min-width: 0;
}
.scrollbar {
    width: 11px;
    height: 344px;
    flex: none;
    background: #c8c8c8;
}
.subject-row {
    height: 68px;
    display: flex;
    align-items: center;
    padding: 0 11px 0 72px;
}
.subject {
    margin: 0;
    font-family: "Open Sans", sans-serif;
    font-size: 21px;
    font-weight: 400;
    color: #202124;
    white-space: nowrap;
}
.chip {
    width: 41px;
    height: 18px;
    margin-left: 10px;
    background: #dddddd;
    border-radius: 2px;
    text-align: center;
    font-size: 13px;
    line-height: 18px;
    color: #555;
}
.chip i {
    font-style: normal;
}
.subject-tools {
    margin-left: auto;
    display: flex;
    gap: 16.5px;
    padding-right: 10px;
}
.msg {
    padding: 8px 11px 0 16px;
}
.msg-first::after {
    content: "";
    display: block;
    height: 1px;
    margin: 0 10px 0 -16px;
    background: #eee;
}
.msg-second {
    padding-top: 20px;
}
.msg-head {
    display: flex;
    align-items: flex-start;
}
.msg-avatar {
    width: 40px;
    height: 40px;
    flex: none;
    border-radius: 50%;
    background: #f1f1f1;
    border: 1px solid #e8e8e8;
    display: flex;
    align-items: center;
    justify-content: center;
}
.msg-avatar svg {
    width: 24px;
    height: 24px;
    fill: #c4c7c9;
}
.msg-who {
    flex: 1;
    min-width: 0;
    margin-left: 16px;
}
.msg-from {
    height: 18px;
    font-size: 14px;
    letter-spacing: .22px;
    line-height: 18px;
    white-space: nowrap;
}
.msg-from b {
    font-weight: 700;
    color: #202124;
}
.msg-email {
    margin-left: 1px;
    font-size: 12px;
    letter-spacing: .27px;
    color: #5f6368;
}
.msg-to {
    height: 18px;
    margin-top: 3px;
    font-size: 12px;
    letter-spacing: .26px;
    line-height: 18px;
    color: #5f6368;
}
.to-arrow {
    display: inline-block;
    vertical-align: middle;
    margin-left: 5px;
    border: 4px solid transparent;
    border-top: 4px solid #666;
    border-bottom: 0;
}
.msg-date {
    font-size: 12px;
    letter-spacing: .32px;
    line-height: 21px;
    color: #5f6368;
    white-space: nowrap;
    margin-right: 10px;
}
.msg-act {
    width: 40px;
    height: 20px;
    flex: none;
    display: flex;
    justify-content: center;
}
.star-on {
    fill: #f7cb4d;
}
.clip {
    margin-right: 6px;
    transform: rotate(90deg);
}
.msg-body {
    font-family: "Liberation Sans", Arial, sans-serif;
    font-size: 13px;
    line-height: 19px;
    color: #222;
    margin-left: 56px;
    white-space: nowrap;
}
.msg-body-first {
    margin-top: 27px;
}
.msg-body-second {
    margin-top: 8px;
}
.tracker {
    display: flex;
    align-items: center;
    margin: 46px 0 28px 65px;
    height: 38px;
    font-size: 13px;
    line-height: 19px;
    color: #777;
}
.tracker-check {
    width: 32px;
    height: 16px;
    margin: 0 15px 4px 0;
}
.tracker a {
    display: block;
    color: #4a7bf0;
}
.trimmed {
    width: 24px;
    height: 11px;
    margin: 11px 0 0 56px;
    display: flex;
    align-items: center;
    justify-content: center;
    gap: 2px;
    background: #e8eaed;
    border-radius: 6px;
}
.trimmed i {
    width: 4px;
    height: 4px;
    border-radius: 50%;
    background: #5f6368;
}

/* right rail */
.rail {
    width: 56px;
    flex: none;
    display: flex;
    flex-direction: column;
    align-items: center;
    border-left: 1px solid #eee;
}
.rail-slot {
    height: 56px;
    flex: none;
    display: flex;
    align-items: center;
    justify-content: center;
}
.rail-ic {
    width: 20px;
    height: 20px;
}
.cal-num {
    font-family: Roboto, sans-serif;
    font-size: 8px;
    font-weight: 700;
    fill: #4285f4;
    text-anchor: middle;
}
.rail-line {
    width: 20px;
    height: 1px;
    flex: none;
    margin: 15px 0 17px;
    background: #dadce0;
}
.rail-open {
    margin-top: auto;
    margin-bottom: 18px;
}

/* taskbar */
.taskbar {
    height: 40px;
    flex: none;
    display: flex;
    align-items: center;
    background: linear-gradient(to right, #1d3640, #1b3142 50%, #182a45);
}
.start {
    width: 48px;
    display: flex;
    justify-content: center;
}
.start svg {
    width: 16px;
    height: 16px;
}
.win-search {
    width: 344px;
    height: 40px;
    flex: none;
    display: flex;
    align-items: center;
    padding-left: 12px;
    background: #f2f2f2;
    border-top: 1px solid #bbb;
    border-bottom: 1px solid #bbb;
    font-family: "Open Sans", sans-serif;
    font-size: 14px;
    color: #222;
}
.win-search svg {
    width: 20px;
    height: 20px;
    margin-right: 8px;
}
.task-apps {
    display: flex;
    height: 40px;
}
.task-app {
    width: 47.4px;
    height: 40px;
    flex: none;
    position: relative;
    display: flex;
    align-items: center;
    justify-content: center;
}
.task-ic {
    width: 24px;
    height: 24px;
}
.task-view {
    width: 18px;
    height: 18px;
}
.app-pc, .app-mail {
    padding-left: 8px;
}
.cortana {
    width: 16px;
    height: 16px;
    border: 2px solid #fff;
    border-radius: 50%;
}
.edge {
    width: 24px;
    height: 24px;
    border-radius: 50%;
    background: radial-gradient(circle at 60% 60%, #1c3340 0 22%, transparent 23%), conic-gradient(from 20deg, #44d37c, #1f9ae0 45%, #0b63b8 70%, #2ec5b0);
}
.acrobat {
    width: 24px;
    height: 24px;
    background: linear-gradient(#d42525, #8f0f0f);
}
.acrobat svg {
    display: block;
}
.chrome-logo {
    width: 22px;
    height: 22px;
    border-radius: 50%;
    background: radial-gradient(circle, #4285f4 0 29%, #fff 30% 42%, transparent 43%), conic-gradient(from 300deg, #ea4335 0 120deg, #fbbc04 120deg 240deg, #34a853 240deg);
}
.utorrent {
    width: 24px;
    height: 24px;
    border-radius: 50%;
    background: #76b82a;
    color: #fff;
    font-size: 20px;
    font-weight: 700;
    line-height: 22px;
    text-align: center;
}
.task-on {
    background: #4a5a66;
    border-bottom: 2px solid #76b9ed;
}
.task-open {
    border-bottom: 2px solid #76b9ed;
    padding-top: 2px;
}
.chrome-badge {
    position: absolute;
    right: 9px;
    bottom: 5px;
    width: 15px;
    height: 15px;
    border-radius: 50%;
    background: #ef6c00;
    color: #fff;
    font-size: 9px;
    line-height: 15px;
    text-align: center;
}
.tray {
    flex: 1;
    display: flex;
    align-items: center;
    padding-left: 22px;
    color: #fff;
}
.tray-weather {
    width: 24px;
    height: 18px;
    flex: none;
}
.tray-temp {
    width: 44px;
    margin-left: 10px;
    font-family: "Open Sans", sans-serif;
    font-size: 13px;
    color: #e4e8ec;
}
.tray-ic {
    width: 16px;
    height: 16px;
    flex: none;
    margin-right: 8px;
}
.clock {
    width: 70px;
    margin-left: -5px;
    font-family: "Open Sans", sans-serif;
    font-size: 11.5px;
    line-height: 19px;
    text-align: center;
    color: #f2f2f2;
}
.notify {
    margin-left: 12px;
    position: relative;
    display: block;
    width: 16px;
    height: 16px;
}
.notify svg {
    width: 16px;
    height: 16px;
    display: block;
}
.notify-count {
    position: absolute;
    right: -8px;
    bottom: -6px;
    width: 16px;
    height: 16px;
    border-radius: 50%;
    background: #3b3f46;
    border: 1px solid #aaa;
    font-size: 10px;
    font-weight: 400;
    line-height: 14px;
    text-align: center;
}
```
